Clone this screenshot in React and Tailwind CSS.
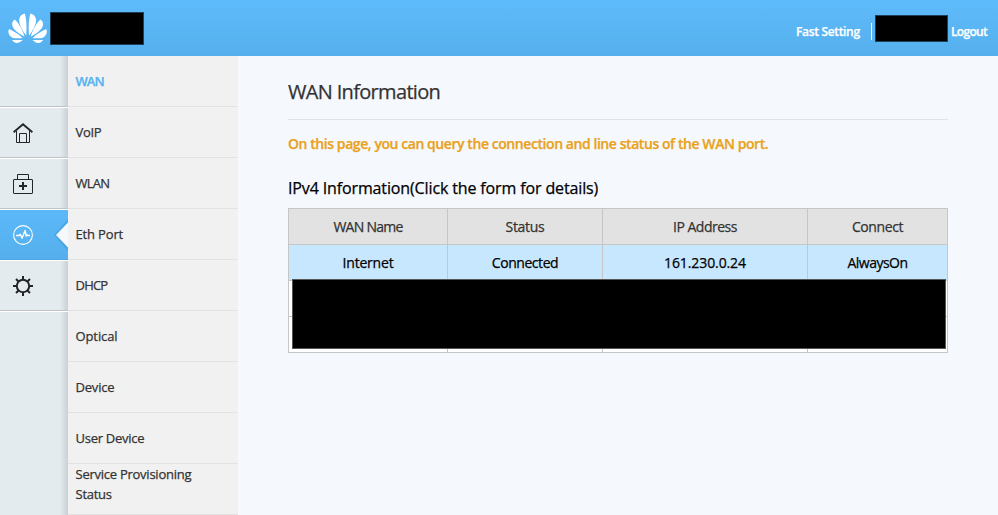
import React from 'react';

const menu = [
  { label: 'WAN', cls: 'tracking-[-1px]' },
  { label: 'VoIP', cls: 'tracking-[-0.3px]' },
  { label: 'WLAN', cls: 'tracking-[-0.75px]' },
  { label: 'Eth Port', cls: 'tracking-[-0.15px]' },
  { label: 'DHCP', cls: 'tracking-[-0.8px]' },
  { label: 'Optical', cls: 'tracking-[-0.1px]' },
  { label: 'Device', cls: 'tracking-[-0.2px]' },
  { label: 'User Device', cls: 'tracking-[-0.27px]' },
  { label: 'Service Provisioning Status', cls: 'tracking-[-0.25px] pb-[11px]' },
];

function LogoHalf() {
  return (
    <>
      <path d="M18.2 23.6C14.5 19 10.6 12 11.2 7.3C11.8 3.9 14 2.2 16.8 1.6C18.6 7 18.8 16 18.2 23.6Z" />
      <path d="M16.5 24.7C11 21.8 5 17.8 4.2 13C3.9 10.3 5.2 8.6 6.8 7.6C10.8 11.2 14.8 18.6 16.5 24.7Z" />
      <path d="M14.6 26.2H6.7C2.7 25.8 0.4 22.4 0.4 19.7C0.4 18.3 0.8 17.6 1.1 17.1C6.2 19.4 11.6 22.8 14.6 26.2Z" />
      <path d="M14.8 28C13 29.6 11 31.1 8.8 31C6.6 30.8 5 29.6 4 28Z" />
    </>
  );
}

function Logo() {
  return (
    <svg width="40" height="32" viewBox="0 0 40 32" fill="#fff" className="ml-2 shrink-0">
      <LogoHalf />
      <g transform="translate(39.2 0) scale(-1 1)">
        <LogoHalf />
      </g>
    </svg>
  );
}

function HomeIcon() {
  return (
    <svg width="20" height="20" viewBox="0 0 20 20" fill="none" stroke="#222629">
      <path d="M0.6 9.3L10 1.2L19.4 9.3" strokeWidth="1.8" />
      <path d="M3.5 8V19.5H16.5V8" />
      <path d="M6.5 19V10.5H13.5V19" />
    </svg>
  );
}

function KitIcon() {
  return (
    <svg width="20" height="20" viewBox="0 0 20 20" fill="none" stroke="#222629">
      <rect x="0.5" y="5.5" width="19" height="14" rx="0.5" />
      <path d="M4.5 5V0.5H15.5V5" />
      <path d="M6 12.1H14M10 8.1V16.1" strokeWidth="2" />
    </svg>
  );
}

function PulseIcon() {
  return (
    <svg width="20" height="20" viewBox="0 0 20 20" fill="none" stroke="#fff">
      <circle cx="10" cy="10" r="9.4" strokeWidth="1.1" />
      <path d="M3 10.5H6L7.3 9.3L9 13.3L12.1 5.5L13.2 11L14.2 9.8L15 10.5H17" strokeWidth="1.4" strokeLinejoin="round" />
    </svg>
  );
}

function GearIcon() {
  return (
    <svg width="20" height="20" viewBox="0 0 20 20" fill="none" stroke="#222629" strokeWidth="2">
      <circle cx="10" cy="10" r="6.2" />
      <path d="M10 0V4M10 16V20M0 10H4M16 10H20M3 3L5.8 5.8M14.2 14.2L17 17M3 17L5.8 14.2M14.2 5.8L17 3" />
    </svg>
  );
}

function RailRow({ active, children }) {
  return (
    <div
      className={`relative h-[51px] border-t border-b border-t-white pl-[13px] flex items-center ${
        active ? 'bg-linear-to-b from-[#5cb8f9] to-[#55afec] border-b-[#4fa5e0]' : 'border-b-[#bec4c6]'
      }`}
    >
      {children}
      {active && (
        <svg className="absolute right-0 top-[9px]" width="14" height="32" viewBox="0 0 14 32">
          <path d="M0 16L14 0V32Z" fill="#3e94d2" opacity="0.45" />
          <path d="M2 16L14 3.5V28.5Z" fill="#f5f8fd" />
        </svg>
      )}
    </div>
  );
}

export default function App() {
  return (
    <div className="w-[998px] h-[515px] overflow-hidden flex flex-col bg-[#f5f8fd] font-['Trebuchet_MS','Open_Sans',sans-serif] text-[#333] [-webkit-text-stroke:0.25px_currentColor]">
      <header className="h-14 shrink-0 flex items-center bg-linear-to-b from-[#5ebbfb] to-[#55afec] text-white">
        <Logo />
        <div className="ml-[2px] w-[94px] h-[33px] bg-black border border-[#204059]" />
        <div className="ml-auto mr-[10px] pt-[5px] flex items-center text-xs font-semibold whitespace-nowrap">
          <span className="w-[64px] pt-[3px] tracking-[-0.33px]">Fast Setting</span>
          <i className="ml-[11px] mt-[2px] w-px h-[17px] bg-white" />
          <div className="ml-[3px] mb-[4px] w-[73px] h-[27px] bg-black border border-[#204059]" />
          <span className="ml-[3px] pt-[3px] w-[37px] tracking-[-0.7px]">Logout</span>
        </div>
      </header>
      <div className="flex-1 flex min-h-0">
        <aside className="relative w-[68px] shrink-0 bg-[#e4ebee]">
          <div className="absolute inset-y-0 right-0 w-[8px] bg-linear-to-r from-transparent to-[#c9d1d4]" />
          <div className="relative h-[51px] border-b border-[#bec4c6]" />
          <RailRow><HomeIcon /></RailRow>
          <RailRow><KitIcon /></RailRow>
          <RailRow active><PulseIcon /></RailRow>
          <RailRow><GearIcon /></RailRow>
          <div className="relative h-px bg-white" />
        </aside>
        <nav className="w-[170px] shrink-0 bg-[#f1f1f1]">
          {menu.map((m, i) => (
            <div
              key={m.label}
              className={`h-[51px] pl-[7.5px] pr-8 flex items-center border-b border-[#e2e2e2] text-[13px] leading-5 ${m.cls} ${
                i === 0 ? 'text-[#56b2f0] font-semibold' : ''
              }`}
            >
              {m.label}
            </div>
          ))}
        </nav>
        <main className="flex-1 pl-[50px] pr-[50px]">
          <h1 className="h-16 pt-[22px] text-[20px] leading-7 tracking-[-0.67px] border-b border-[#dfe3e7] whitespace-nowrap">WAN Information</h1>
          <p className="mt-[14px] text-sm leading-5 font-semibold text-[#e9a21b] whitespace-nowrap tracking-[-0.433px]">
            On this page, you can query the connection and line status of the WAN port.
          </p>
          <h2 className="mt-[22px] h-8 text-base leading-6 text-black whitespace-nowrap tracking-[-0.13px]">
            IPv4 Information(Click the form for details)
          </h2>
          <div className="relative">
            <table className="w-[660px] table-fixed border-separate border-spacing-0 border-t border-l border-[#c6c6c6] text-sm text-center [&_td]:h-9 [&_th]:h-9 [&_td]:p-0 [&_th]:p-0 [&_th]:font-normal [&_td]:border-r [&_td]:border-b [&_td]:border-[#c6c6c6] [&_th]:border-r [&_th]:border-b [&_th]:border-[#c6c6c6]">
              <colgroup>
                <col className="w-[159px]" />
                <col className="w-[155px]" />
                <col className="w-[205px]" />
                <col className="w-[140px]" />
              </colgroup>
              <tbody>
                <tr className="bg-[#e2e2e2]">
                  <th className="tracking-[-0.75px]">WAN Name</th>
                  <th className="tracking-[-0.3px]">Status</th>
                  <th className="tracking-[-0.5px]">IP Address</th>
                  <th className="tracking-[-0.4px]">Connect</th>
                </tr>
                <tr className="bg-[#c7e7ff] text-black">
                  <td className="tracking-[-0.2px]">Internet</td>
                  <td className="tracking-[-0.45px]">Connected</td>
                  <td className="tracking-[-0.1px]">161.230.0.24</td>
                  <td className="tracking-[-0.5px]">AlwaysOn</td>
                </tr>
                <tr className="bg-white"><td /><td /><td /><td /></tr>
                <tr className="bg-white"><td /><td /><td /><td /></tr>
              </tbody>
            </table>
            <div className="absolute left-1 top-[71px] w-[654px] h-[70px] bg-black border border-[#555]" />
          </div>
        </main>
      </div>
    </div>
  );
}
